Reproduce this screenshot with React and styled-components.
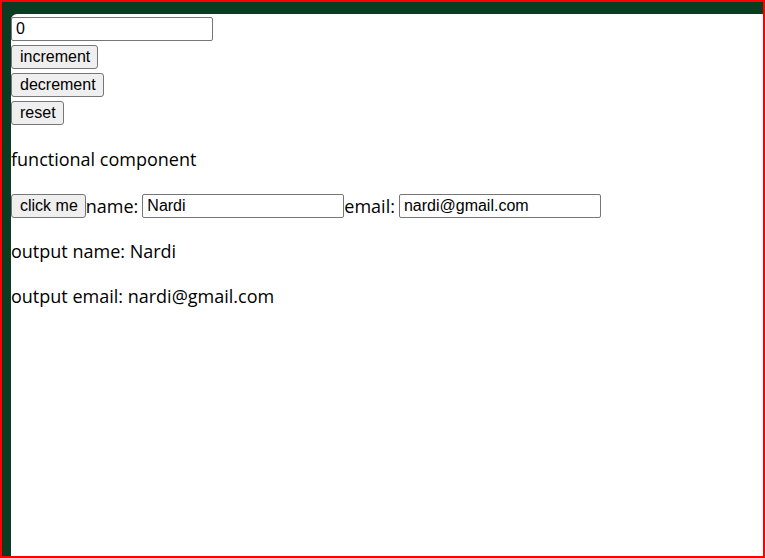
import React, { useState } from 'react';
import styled, { createGlobalStyle } from 'styled-components';

const GlobalStyle = createGlobalStyle`
  html, body, #root {
    height: 100%;
    margin: 0;
  }
  body {
    box-sizing: border-box;
    border: 2px solid #ff0000;
    background: #0b3b21;
    font-family: "Open Sans", "Noto Sans", sans-serif;
    color: #000;
  }
`;

const Panel = styled.div`
  box-sizing: border-box;
  height: calc(100% - 12px);
  margin: 12px 0 0 9px;
  padding-top: 3px;
  background: #fff;
  border-top-left-radius: 6px;
`;

const Stack = styled.div`
  display: flex;
  flex-direction: column;
  align-items: flex-start;
  gap: 4px;
  padding-bottom: 2px;
`;

const TextInput = styled.input`
  box-sizing: border-box;
  width: ${(p) => p.$width || 202}px;
  height: 24px;
  padding: 0 4px;
  border: 1px solid #767676;
  border-radius: 2px;
  font-family: "Liberation Sans", Arial, sans-serif;
  font-size: 16px;
  color: #000;
  background: #fff;
  outline: none;
`;

const Button = styled.button`
  box-sizing: border-box;
  height: 24px;
  padding: 0 7px 0 8px;
  border: 1px solid #767676;
  border-radius: 3px;
  background: #efefef;
  font-family: "Liberation Sans", Arial, sans-serif;
  font-size: 16px;
  color: #000;
  cursor: pointer;
`;

const Text = styled.p`
  margin: 19px 0 ${(p) => (p.$spaced ? 21 : 19)}px;
  font-size: 18px;
  line-height: 26px;
`;

const FormRow = styled.div`
  display: flex;
  align-items: center;
  font-size: 18px;
  line-height: 26px;
`;

const Field = styled.label`
  display: flex;
  align-items: center;
  gap: 4px;
`;

export default function App() {
  const [count, setCount] = useState(0);
  const [name, setName] = useState('Nardi');
  const [email, setEmail] = useState('nardi@gmail.com');

  return (
    <>
      <GlobalStyle />
      <Panel>
        <Stack>
          <TextInput value={count} readOnly />
          <Button onClick={() => setCount(count + 1)}>increment</Button>
          <Button onClick={() => setCount(count - 1)}>decrement</Button>
          <Button onClick={() => setCount(0)}>reset</Button>
        </Stack>
        <Text $spaced>functional component</Text>
        <FormRow>
          <Button>click me</Button>
          <Field>
            name:
            <TextInput value={name} onChange={(e) => setName(e.target.value)} />
          </Field>
          <Field>
            email:
            <TextInput value={email} onChange={(e) => setEmail(e.target.value)} />
          </Field>
        </FormRow>
        <Text>output name: {name}</Text>
        <Text>output email: {email}</Text>
      </Panel>
    </>
  );
}
